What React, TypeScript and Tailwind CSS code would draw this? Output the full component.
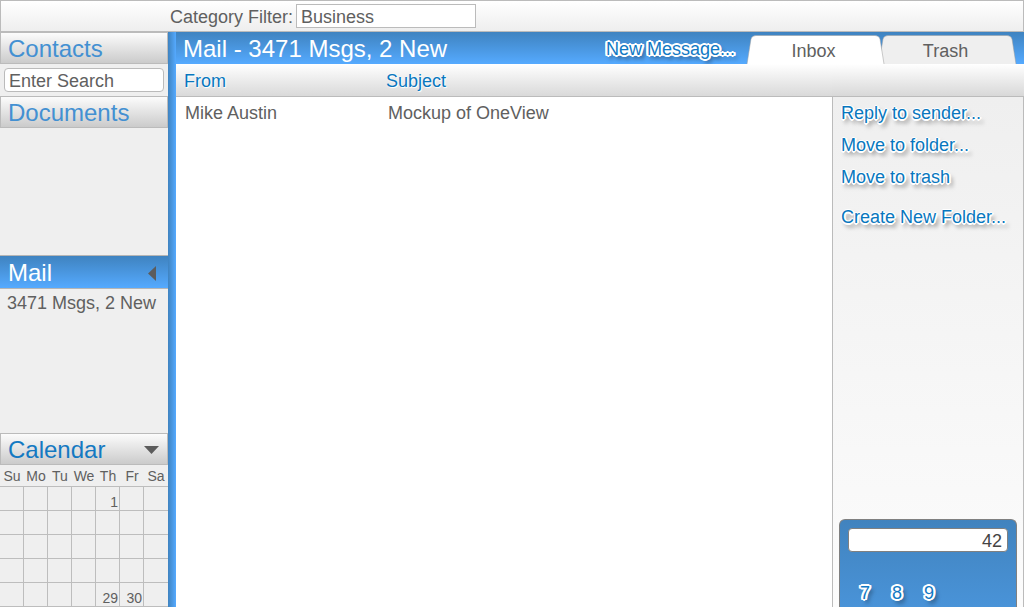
import { useState } from "react";

const outline =
  "[text-shadow:1px_0_0_#fff,-1px_0_0_#fff,0_1px_0_#fff,0_-1px_0_#fff,1px_1px_0_#fff,-1px_1px_0_#fff,1px_-1px_0_#fff,-1px_-1px_0_#fff,2px_0_0_#fff,-2px_0_0_#fff,0_2px_0_#fff,0_-2px_0_#fff,2px_1px_0_#fff,-2px_1px_0_#fff,2px_-1px_0_#fff,-2px_-1px_0_#fff,3px_4px_4px_rgba(0,0,0,0.6)]";
const panelOutline =
  "[text-shadow:1px_0_0_#fff,-1px_0_0_#fff,0_1px_0_#fff,0_-1px_0_#fff,1px_1px_0_#fff,-1px_1px_0_#fff,2px_0_0_#fff,0_2px_0_#fff,3px_4px_4px_rgba(0,0,0,0.55)]";

const weekDays = ["Su", "Mo", "Tu", "We", "Th", "Fr", "Sa"];
const weeks = [
  ["", "", "", "", "1", "", ""],
  ["", "", "", "", "", "", ""],
  ["", "", "", "", "", "", ""],
  ["", "", "", "", "", "", ""],
  ["", "", "", "", "29", "30", ""],
];
const messages = [{ from: "Mike Austin", subject: "Mockup of OneView" }];

function SectionHeader({ title, bright }: { title: string; bright?: boolean }) {
  return (
    <div className="flex h-8 shrink-0 items-center justify-between border border-[#bbb] bg-linear-to-b from-[#fcfcfc] to-[#cbcbcb] pt-0.5 pr-2 pl-[7px]">
      <h2 className={bright ? "text-2xl text-[#1479c2]" : "text-2xl text-[#4390d2]"}>{title}</h2>
      {bright && (
        <svg width="15" height="8" viewBox="0 0 15 8" aria-hidden="true">
          <path d="M0 0h15L7.500 8z" fill="#5c5c5c" />
        </svg>
      )}
    </div>
  );
}

function Sidebar() {
  return (
    <aside className="flex w-42 shrink-0 flex-col bg-[#efefef]">
      <SectionHeader title="Contacts" />
      <div className="shrink-0 p-1">
        <input
          aria-label="Search contacts"
          placeholder="Enter Search"
          className="block h-6 w-full rounded-[4px] border border-[#bbb] bg-white px-1 pt-0.5 text-[18px] leading-[22px] placeholder:text-[#606060] placeholder:opacity-100"
        />
      </div>
      <SectionHeader title="Documents" />
      <div className="flex-[127]" />
      <div className="flex h-[34px] shrink-0 items-center justify-between border-y border-[#b5b5b5] bg-linear-to-b from-[#3f83c0] to-[#55aaff] pt-0.5 pr-3 pl-2">
        <h2 className="text-2xl text-white">Mail</h2>
        <svg width="8" height="15" viewBox="0 0 8 15" aria-hidden="true">
          <path d="M8 0v15L0 7.500z" fill="#5c5c5c" />
        </svg>
      </div>
      <div className="flex-[144]">
        <p className="px-[7px] py-0.5 whitespace-nowrap">3471 Msgs, 2 New</p>
      </div>
      <SectionHeader title="Calendar" bright />
      <table className="w-full shrink-0 table-fixed border-separate border-spacing-0 text-sm">
        <thead>
          <tr className="h-[22px]">
            {weekDays.map((day) => (
              <th key={day} className="border-b border-[#bdbdbd] p-0 text-center leading-5 font-normal">
                {day}
              </th>
            ))}
          </tr>
        </thead>
        <tbody>
          {weeks.map((week, i) => (
            <tr key={i} className="h-6">
              {week.map((date, j) => (
                <td
                  key={j}
                  className="border-r border-b border-[#bdbdbd] p-0 pr-px text-right align-bottom leading-4 last:border-r-0"
                >
                  {date}
                </td>
              ))}
            </tr>
          ))}
        </tbody>
      </table>
    </aside>
  );
}

function Tab({ label, active, onSelect }: { label: string; active: boolean; onSelect: () => void }) {
  return (
    <button
      type="button"
      role="tab"
      aria-selected={active}
      onClick={onSelect}
      className={active ? "relative z-10 h-[29px] w-[137px] pt-0.5 pr-1" : "relative h-[29px] w-[137px] pt-0.5 pr-1"}
    >
      <svg
        className="absolute inset-0 size-full overflow-visible"
        viewBox="0 0 138 29"
        preserveAspectRatio="none"
        aria-hidden="true"
      >
        <path
          d="M0 29L4 4Q5 0.500 9 0.500H129Q133 0.500 134 4L138 29Z"
          fill={active ? "#fff" : "#efefef"}
        />
        <path
          d="M0 29L4 4Q5 0.500 9 0.500H129Q133 0.500 134 4L138 29"
          fill="none"
          stroke="#9b9b9b"
          strokeOpacity="0.5"
        />
      </svg>
      <span className="relative">{label}</span>
    </button>
  );
}

function Calculator() {
  return (
    <section
      aria-label="Calculator"
      className="mx-1.5 flex h-22 shrink-0 flex-col justify-between rounded-t-md border border-b-0 border-[#808080] bg-linear-to-b from-[#4183be] to-[#4993d8] px-2 pt-2"
    >
      <input
        aria-label="Result"
        defaultValue="42"
        className="block h-6 w-full rounded-[4px] border border-[#808080] bg-white px-[5px] pt-0.5 text-right text-[18px] leading-[22px] text-[#444]"
      />
      <div className="flex px-px">
        {["7", "8", "9"].map((digit) => (
          <button key={digit} type="button" className={`w-8 leading-7 text-[#1179c4] ${outline}`}>
            {digit}
          </button>
        ))}
      </div>
    </section>
  );
}

export default function App() {
  const [tab, setTab] = useState("Inbox");
  return (
    <div className="flex h-screen flex-col overflow-hidden bg-white font-['Liberation_Sans',Arial,sans-serif] text-[18px] leading-6 text-[#606060]">
      <header className="flex h-8 shrink-0 items-center gap-[3px] border border-[#bbb] bg-linear-to-b from-white to-[#eee] pl-[169px]">
        <label htmlFor="category" className="pt-0.5">
          Category Filter:
        </label>
        <input
          id="category"
          defaultValue="Business"
          className="h-6 w-45 border border-[#bbb] bg-white px-1 pt-0.5 text-[18px] leading-[22px]"
        />
      </header>
      <div className="flex min-h-0 flex-1">
        <Sidebar />
        <div className="w-2 shrink-0 bg-linear-to-r from-[#3f83c0] to-[#55aaff]" />
        <main className="flex min-w-0 flex-1 flex-col">
          <div className="flex h-8 shrink-0 items-end bg-linear-to-b from-[#3f83c0] to-[#55aaff] pr-2 pl-[7px]">
            <h1 className="flex-1 text-2xl leading-[30px] text-white">Mail - 3471 Msgs, 2 New</h1>
            <button type="button" className={`mr-3 leading-[30px] text-[#1179c4] ${outline}`}>
              New Message...
            </button>
            <div role="tablist" className="flex -space-x-[5px]">
              {["Inbox", "Trash"].map((name) => (
                <Tab key={name} label={name} active={tab === name} onSelect={() => setTab(name)} />
              ))}
            </div>
          </div>
          <div className="flex min-h-0 flex-1">
            <table className="h-fit w-full table-fixed border-separate border-spacing-0 text-left">
              <thead>
                <tr className="h-[33px] bg-linear-to-b from-white to-[#d8d8d8] text-[#0877be] [text-shadow:0_0_2px_#fff,1px_1px_1px_#fff]">
                  <th className="w-[203px] border-b border-[#bbb] p-0 pt-0.5 pl-2 font-normal">From</th>
                  <th className="border-b border-[#bbb] p-0 pt-0.5 pl-[7px] font-normal">Subject</th>
                </tr>
              </thead>
              <tbody>
                {messages.map((message) => (
                  <tr key={message.subject} className="h-8">
                    <td className="p-0 pl-[9px]">{message.from}</td>
                    <td className="p-0 pl-[9px]">{message.subject}</td>
                  </tr>
                ))}
              </tbody>
            </table>
            <div className="flex w-48 shrink-0 flex-col">
              <div className="h-[33px] shrink-0 border-b border-[#bbb] bg-linear-to-b from-white to-[#d8d8d8]" />
              <aside className="flex min-h-0 flex-1 flex-col justify-between border-x border-[#bbb] bg-linear-to-b from-[#efefef] to-[#fcfcfc]">
                <nav className={`flex flex-col gap-2 px-2 pt-1 whitespace-nowrap text-[#0877be] ${panelOutline}`}>
                  <a href="#reply">Reply to sender...</a>
                  <a href="#move">Move to folder...</a>
                  <a href="#trash">Move to trash</a>
                  <a href="#create" className="pt-2">
                    Create New Folder...
                  </a>
                </nav>
                <Calculator />
              </aside>
            </div>
          </div>
        </main>
      </div>
    </div>
  );
}
